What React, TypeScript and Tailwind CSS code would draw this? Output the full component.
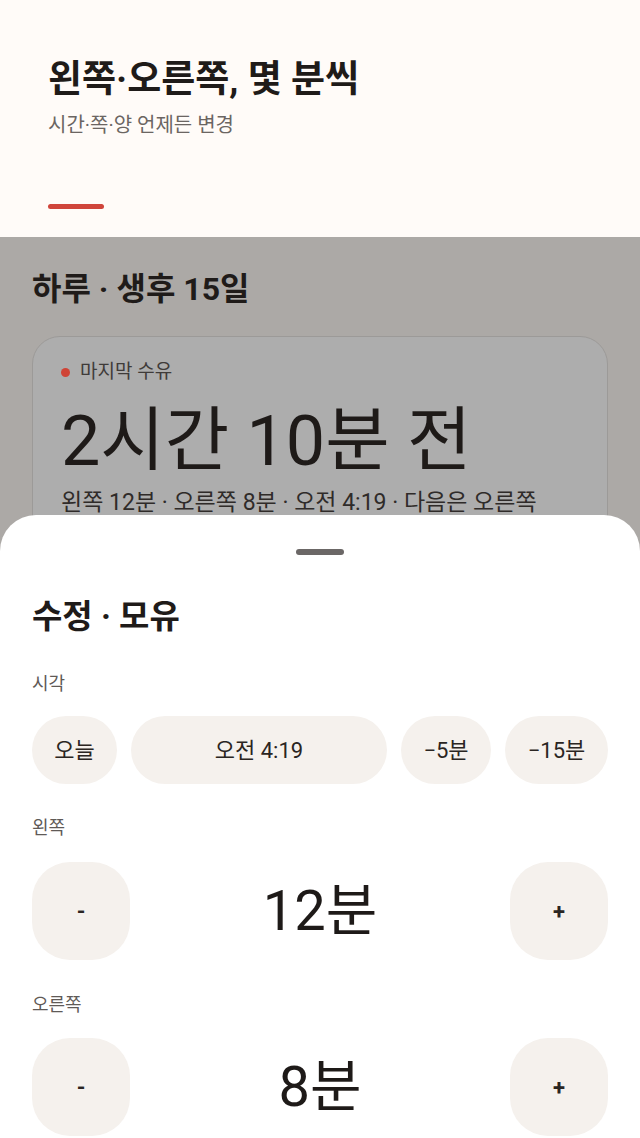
import React from "react"

const FONT = "font-['Roboto','Noto_Sans_CJK_KR',sans-serif]"

const Chip = ({ label, className }: { label: string; className: string }) => (
  <button className={`h-[68px] rounded-full bg-[#f5f1ed] text-[22px] text-[#2a2522] flex items-center justify-center ${className}`}>
    {label}
  </button>
)

const Stepper = ({ value }: { value: string }) => (
  <div className="flex items-center justify-between">
    <button className="w-[98px] h-[98px] rounded-[38px] bg-[#f5f1ed] text-[22px] font-bold text-[#2a2522] flex items-center justify-center">
      -
    </button>
    <div className="text-[56px] leading-none text-[#1e1a18]">{value}</div>
    <button className="w-[98px] h-[98px] rounded-[38px] bg-[#f5f1ed] text-[22px] font-bold text-[#2a2522] flex items-center justify-center">
      +
    </button>
  </div>
)

export default function App() {
  return (
    <div className={`${FONT} relative w-full h-[1138px] overflow-hidden bg-[#aca9a6]`}>
      {/* header */}
      <div className="h-[237px] bg-[#fffbf8] px-12 pt-[57px]">
        <h1 className="text-[37px] font-bold leading-[46px] text-[#1f1b19]">왼쪽·오른쪽, 몇 분씩</h1>
        <p className="mt-[8px] text-[20px] leading-[28px] text-[#6b6562]">시간·쪽·양 언제든 변경</p>
        <div className="mt-[65px] h-[5px] w-[56px] rounded-full bg-[#d0453b]" />
      </div>

      {/* dimmed page */}
      <div className="px-8 pt-[31px]">
        <h2 className="text-[32px] font-bold leading-[42px] text-[#1f1b19]">하루 · 생후 15일</h2>
        <div className="mt-[26px] rounded-[28px] border border-[#9c9a98] bg-[#adadad] px-7 pt-[22px] pb-8">
          <div className="flex items-center gap-[10px]">
            <span className="w-[9px] h-[9px] rounded-full bg-[#cf4436]" />
            <span className="text-[19px] leading-[26px] text-[#3f3b39]">마지막 수유</span>
          </div>
          <div className="mt-[16px] text-[70px] leading-[80px] text-[#1e1a18]">2시간 10분 전</div>
          <div className="mt-[7px] text-[23px] leading-[30px] text-[#2f2b29] whitespace-nowrap">
            왼쪽 12분 · 오른쪽 8분 · 오전 4:19 · 다음은 오른쪽
          </div>
        </div>
      </div>

      {/* bottom sheet */}
      <div className="absolute left-0 right-0 top-[515px] bottom-0 rounded-t-[36px] bg-white px-8 pt-[34px]">
        <div className="mx-auto h-[6px] w-12 rounded-full bg-[#6b6766]" />
        <h3 className="mt-[41px] text-[33px] font-bold leading-[42px] text-[#1f1b19]">수정 · 모유</h3>

        <div className="mt-[34px] text-[18px] leading-[24px] text-[#5f5a57]">시각</div>
        <div className="mt-[20px] flex gap-[14px]">
          <Chip label="오늘" className="w-[85px]" />
          <Chip label="오전 4:19" className="flex-1" />
          <Chip label="−5분" className="w-[90px]" />
          <Chip label="−15분" className="w-[103px]" />
        </div>

        <div className="mt-[32px] text-[18px] leading-[24px] text-[#5f5a57]">왼쪽</div>
        <div className="mt-[22px]">
          <Stepper value="12분" />
        </div>

        <div className="mt-[33px] text-[18px] leading-[24px] text-[#5f5a57]">오른쪽</div>
        <div className="mt-[21px]">
          <Stepper value="8분" />
        </div>
      </div>
    </div>
  )
}
